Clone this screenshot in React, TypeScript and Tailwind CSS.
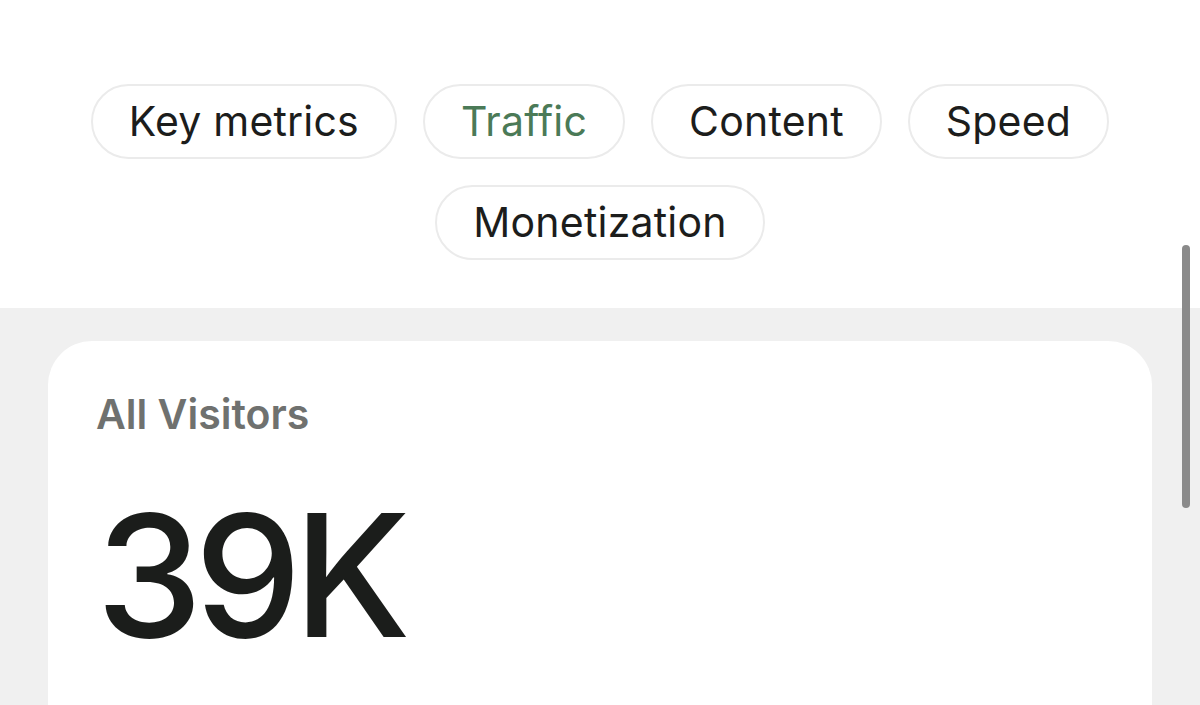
import React from "react";

const tabs = ["Key metrics", "Traffic", "Content", "Speed", "Monetization"];

function Chip({ label, active }: { label: string; active?: boolean }) {
  return (
    <button
      type="button"
      className={
        "h-[75px] rounded-full border-2 border-[#ebebeb] bg-white px-[36px] text-[41px] leading-none tracking-[0.2px] " +
        (active ? "text-[#4b7a57]" : "text-[#1c1d1c]")
      }
    >
      {label}
    </button>
  );
}

export default function App() {
  return (
    <div
      className="relative h-[705px] w-[1200px] overflow-hidden bg-[#f0f0f0]"
      style={{ fontFamily: "Inter, 'Noto Sans', sans-serif" }}
    >
      <div className="flex flex-wrap justify-center gap-x-[26px] gap-y-[26px] bg-white px-[60px] pb-[48px] pt-[84px]">
        {tabs.map((t) => (
          <Chip key={t} label={t} active={t === "Traffic"} />
        ))}
      </div>

      <div className="px-[48px] pt-[33px]">
        <div className="h-[420px] rounded-[44px] bg-white px-[48px] pt-[53px]">
          <div className="text-[41px] font-semibold leading-none text-[#6f716f]">All Visitors</div>
          <div className="mt-[55px] text-[170px] font-medium leading-none tracking-[-8px] text-[#1b1d1b]">
            39K
          </div>
        </div>
      </div>

      <div className="absolute right-[10px] top-[245px] h-[263px] w-[8px] rounded-full bg-[#8a8a8a]" />
    </div>
  );
}
